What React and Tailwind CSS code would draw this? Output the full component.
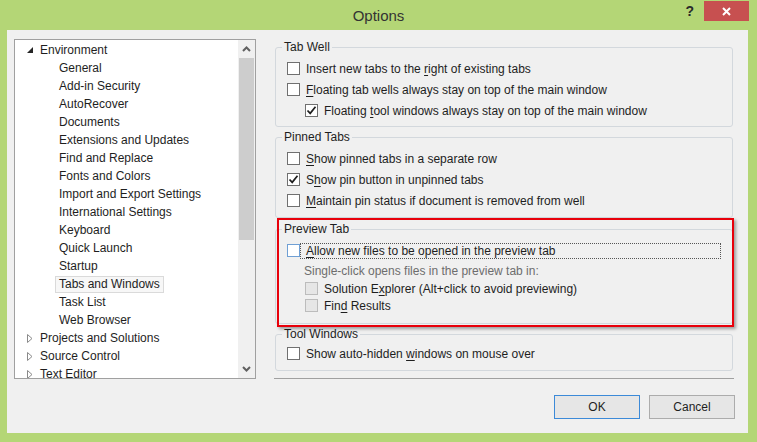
import clsx from "clsx";

const TREE = [
  { label: "Environment", level: 0, state: "open" },
  { label: "General", level: 1 },
  { label: "Add-in Security", level: 1 },
  { label: "AutoRecover", level: 1 },
  { label: "Documents", level: 1 },
  { label: "Extensions and Updates", level: 1 },
  { label: "Find and Replace", level: 1 },
  { label: "Fonts and Colors", level: 1 },
  { label: "Import and Export Settings", level: 1 },
  { label: "International Settings", level: 1 },
  { label: "Keyboard", level: 1 },
  { label: "Quick Launch", level: 1 },
  { label: "Startup", level: 1 },
  { label: "Tabs and Windows", level: 1, selected: true },
  { label: "Task List", level: 1 },
  { label: "Web Browser", level: 1 },
  { label: "Projects and Solutions", level: 0, state: "closed" },
  { label: "Source Control", level: 0, state: "closed" },
  { label: "Text Editor", level: 0, state: "closed" },
];

function Check({ checked, disabled, hot }) {
  return (
    <span
      className={clsx(
        "w-[13px] h-[13px] border flex items-center justify-center shrink-0",
        disabled
          ? "border-[#bcbcbc] bg-[#e6e6e6]"
          : hot
          ? "border-[#6f9fd4] bg-white"
          : "border-[#707070] bg-white"
      )}
    >
      {checked && (
        <svg width="11" height="11" viewBox="0 0 11 11">
          <path d="M1.5 5.5 L4.2 8.4 L9.5 1.8" stroke="#1e1e1e" strokeWidth="1.7" fill="none" />
        </svg>
      )}
    </span>
  );
}

function Row({ checked, disabled, hot, indent, focus, h = "h-[21px]", children }) {
  return (
    <div className={clsx("flex items-center gap-[6px]", h, indent ? "pl-[29px]" : "pl-[11px]")}>
      <Check checked={checked} disabled={disabled} hot={hot} />
      {focus ? (
        <span className="flex-1 -ml-[6px] mr-[11px] pl-[5px] h-[16px] flex items-center border border-dotted border-[#555]">
          {children}
        </span>
      ) : (
        <span>{children}</span>
      )}
    </div>
  );
}

function Group({ title, className, children }) {
  return (
    <fieldset className={clsx("border border-[#d3d8dd] rounded-[3px] min-w-0", className)}>
      <legend className="ml-[6px] px-[2px] leading-[16px]">{title}</legend>
      {children}
    </fieldset>
  );
}

const U = ({ children }) => <span className="underline underline-offset-2">{children}</span>;

function Tree() {
  return (
    <div className="w-[242px] h-[340px] border border-[#a0a0a0] bg-white flex shrink-0">
      <div className="flex-1 flex flex-col overflow-hidden pt-[1px]">
        {TREE.map((item) => (
          <div key={item.label} className="h-[18px] shrink-0 flex items-center">
            {item.level === 0 ? (
              <div className="flex items-center pl-[12px]">
                <span className="w-[13px] flex items-center">
                  {item.state === "open" ? (
                    <svg width="6" height="6" viewBox="0 0 6 6">
                      <path d="M6 0 L6 6 L0 6 Z" fill="#262626" />
                    </svg>
                  ) : (
                    <svg width="6" height="9" viewBox="0 0 6 9">
                      <path d="M0.5 0.5 L5 4.5 L0.5 8.5 Z" fill="none" stroke="#8a8a8a" />
                    </svg>
                  )}
                </span>
                <span>{item.label}</span>
              </div>
            ) : (
              <span
                className={clsx(
                  "ml-[40px] px-[3px] border h-[17px] flex items-center",
                  item.selected ? "border-[#dadada] bg-[#f7f7f7]" : "border-transparent"
                )}
              >
                {item.label}
              </span>
            )}
          </div>
        ))}
      </div>
      <div className="w-[17px] bg-[#f0f0f0] flex flex-col">
        <div className="h-[18px] flex items-center justify-center">
          <svg width="9" height="6" viewBox="0 0 9 6">
            <path d="M1 5 L4.5 1.5 L8 5" stroke="#606060" strokeWidth="2" fill="none" />
          </svg>
        </div>
        <div className="h-[182px] mx-[1px] bg-[#cdcdcd]" />
        <div className="flex-1" />
        <div className="h-[18px] flex items-center justify-center">
          <svg width="9" height="6" viewBox="0 0 9 6">
            <path d="M1 1 L4.5 4.5 L8 1" stroke="#606060" strokeWidth="2" fill="none" />
          </svg>
        </div>
      </div>
    </div>
  );
}

export default function App() {
  return (
    <div className="w-[757px] h-[442px] bg-[#b4d676] flex flex-col font-['Liberation_Sans',Arial,sans-serif] text-[12px] text-[#1e1e1e] overflow-hidden">
      <div className="h-[30px] flex shrink-0">
        <div className="flex-1" />
        <div className="pt-[5px] pl-[8px] text-[15px] text-[#333]">Options</div>
        <div className="flex-1 flex justify-end items-start pr-[8px]">
          <span className="mt-[3px] mr-[10px] text-[14px] font-bold text-[#2a2a2a] leading-[16px]">?</span>
          <div className="mt-[1px] w-[45px] h-[20px] bg-[#c75050] flex items-center justify-center">
            <svg width="9" height="9" viewBox="0 0 9 9">
              <path d="M1 1 L8 8 M8 1 L1 8" stroke="#fff" strokeWidth="2" />
            </svg>
          </div>
        </div>
      </div>
      <div className="ml-[7px] w-[741px] h-[403px] bg-[#f0f0f0] flex pt-[9px] pl-[7px]">
        <Tree />
        <div className="relative ml-[19px] w-[458px] flex flex-col">
          <Group title="Tab Well" className="pt-[3px] pb-[5px]">
            <Row>
              Insert new tabs to the <U>r</U>ight of existing tabs
            </Row>
            <Row>
              <U>F</U>loating tab wells always stay on top of the main window
            </Row>
            <Row checked indent>
              Floating <U>t</U>ool windows always stay on top of the main window
            </Row>
          </Group>
          <Group title="Pinned Tabs" className="mt-[2px] pt-[3px] pb-[6px]">
            <Row>
              <U>S</U>how pinned tabs in a separate row
            </Row>
            <Row checked>
              S<U>h</U>ow pin button in unpinned tabs
            </Row>
            <Row>
              <U>M</U>aintain pin status if document is removed from well
            </Row>
          </Group>
          <Group title="Preview Tab" className="mt-[3px] pt-[3px] pb-[9px]">
            <Row hot focus>
              <span>
                <U>A</U>llow new files to be opened in the preview tab
              </span>
            </Row>
            <div className="h-[19px] flex items-center pl-[28px] text-[#6d6d6d]">
              Single-click opens files in the preview tab in:
            </div>
            <Row disabled indent h="h-[17px]">
              Solution E<U>x</U>plorer (Alt+click to avoid previewing)
            </Row>
            <Row disabled indent h="h-[17px]">
              Fin<U>d</U> Results
            </Row>
          </Group>
          <Group title="Tool Windows" className="mt-[2px] pt-[1px] pb-[6px]">
            <Row>
              Show auto-hidden <U>w</U>indows on mouse over
            </Row>
          </Group>
          <div className="mt-[7px] -ml-px w-[460px] h-px bg-[#a0a0a0]" />
          <div className="mt-[16px] -mr-[2px] flex justify-end gap-[9px]">
            <button className="w-[86px] h-[24px] border border-[#3c8ad8] bg-[#e6e6e6]">OK</button>
            <button className="w-[86px] h-[24px] border border-[#acacac] bg-[#e6e6e6]">Cancel</button>
          </div>
          <div className="absolute left-[2px] top-[179px] w-[457px] h-[109px] border-2 border-[#e8000b] shadow-[2px_2px_3px_rgba(0,0,0,0.35)] pointer-events-none" />
        </div>
      </div>
    </div>
  );
}
